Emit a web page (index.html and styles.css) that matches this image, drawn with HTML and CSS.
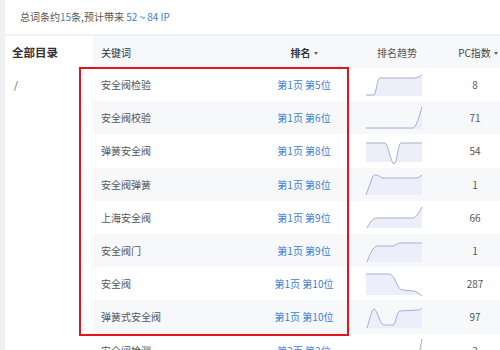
FILE: index.html
```html
<!DOCTYPE html>
<html lang="zh-CN">
<head>
<meta charset="utf-8">
<link rel="stylesheet" href="styles.css">
</head>
<body>
<div class="summary">总词条约<span class="blue">15</span>条,预计带来 <span class="blue">52 ~ 84 IP</span></div>
<div class="main">
  <aside class="side">
    <div class="side-head">全部目录</div>
    <div class="side-item">/</div>
  </aside>
  <div class="table">
    <div class="row head">
      <div class="c-kw">关键词</div>
      <div class="c-rank strong">排名<span class="caret"></span></div>
      <div class="c-trend">排名趋势</div>
      <div class="c-pc">PC指数<span class="caret"></span></div>
    </div>
    <div class="row">
      <div class="c-kw">安全阀检验</div>
      <div class="c-rank blue">第1页 第5位</div>
      <div class="c-trend"><svg class="spark" viewBox="0 0 56 22"><path class="area" d="M0,21 L8,21 C10,21 11,4 14,4 L47,4 C51,4 53,3 56,1 L56,22 L0,22Z"/><path class="line" d="M0,21 L8,21 C10,21 11,4 14,4 L47,4 C51,4 53,3 56,1"/></svg></div>
      <div class="c-pc">8</div>
    </div>
    <div class="row">
      <div class="c-kw">安全阀校验</div>
      <div class="c-rank blue">第1页 第6位</div>
      <div class="c-trend"><svg class="spark" viewBox="0 0 56 22"><path class="area" d="M0,21 L47,21 C50,21 53,10 56,0 L56,22 L0,22Z"/><path class="line" d="M0,21 L47,21 C50,21 53,10 56,0"/></svg></div>
      <div class="c-pc">71</div>
    </div>
    <div class="row">
      <div class="c-kw">弹簧安全阀</div>
      <div class="c-rank blue">第1页 第8位</div>
      <div class="c-trend"><svg class="spark" viewBox="0 0 56 22"><path class="area" d="M0,3 L19,3 C22,3 25,24 28,24 C31,24 32,3 35,3 L56,3 L56,22 L0,22Z"/><path class="line" d="M0,3 L19,3 C22,3 25,24 28,24 C31,24 32,3 35,3 L56,3"/></svg></div>
      <div class="c-pc">54</div>
    </div>
    <div class="row">
      <div class="c-kw">安全阀弹簧</div>
      <div class="c-rank blue">第1页 第8位</div>
      <div class="c-trend"><svg class="spark" viewBox="0 0 56 22"><path class="area" d="M0,22 L7,3 C9,1 12,2 16,5 L50,5 C53,5 54,3 56,2 L56,22 L0,22Z"/><path class="line" d="M0,22 L7,3 C9,1 12,2 16,5 L50,5 C53,5 54,3 56,2"/></svg></div>
      <div class="c-pc">1</div>
    </div>
    <div class="row">
      <div class="c-kw">上海安全阀</div>
      <div class="c-rank blue">第1页 第9位</div>
      <div class="c-trend"><svg class="spark" viewBox="0 0 56 22"><path class="area" d="M1,22 C4,16 7,12 11,12 L47,12 C50,12 53,6 56,1 L56,22 L1,22Z"/><path class="line" d="M1,22 C4,16 7,12 11,12 L47,12 C50,12 53,6 56,1"/></svg></div>
      <div class="c-pc">66</div>
    </div>
    <div class="row">
      <div class="c-kw">安全阀门</div>
      <div class="c-rank blue">第1页 第9位</div>
      <div class="c-trend"><svg class="spark" viewBox="0 0 56 22"><path class="area" d="M1,22 C4,14 7,6 12,6 L26,6 C30,6 30,3 35,3 L56,3 L56,22 L1,22Z"/><path class="line" d="M1,22 C4,14 7,6 12,6 L26,6 C30,6 30,3 35,3 L56,3"/></svg></div>
      <div class="c-pc">1</div>
    </div>
    <div class="row">
      <div class="c-kw">安全阀</div>
      <div class="c-rank blue">第1页 第10位</div>
      <div class="c-trend"><svg class="spark" viewBox="0 0 56 22"><path class="area" d="M0,1 L23,1 C30,1 30,17 37,17 L47,18 C51,18 53,21 56,23 L56,22 L0,22Z"/><path class="line" d="M0,1 L23,1 C30,1 30,17 37,17 L47,18 C51,18 53,21 56,23"/></svg></div>
      <div class="c-pc">287</div>
    </div>
    <div class="row">
      <div class="c-kw">弹簧式安全阀</div>
      <div class="c-rank blue">第1页 第10位</div>
      <div class="c-trend"><svg class="spark" viewBox="0 0 56 22"><path class="area" d="M1,22 C4,12 6,3 8,3 C11,3 14,19 18,19 L27,19 C30,19 30,6 34,5 L52,4 C54,4 55,3 56,2 L56,22 L1,22Z"/><path class="line" d="M1,22 C4,12 6,3 8,3 C11,3 14,19 18,19 L27,19 C30,19 30,6 34,5 L52,4 C54,4 55,3 56,2"/></svg></div>
      <div class="c-pc">97</div>
    </div>
    <div class="row">
      <div class="c-kw">安全阀检测</div>
      <div class="c-rank blue">第2页 第2位</div>
      <div class="c-trend"><svg class="spark" viewBox="0 0 56 22"><path class="area" d="M0,21 L50,21 C52,21 54,10 56,0 L56,22 L0,22Z"/><path class="line" d="M0,21 L50,21 C52,21 54,10 56,0"/></svg></div>
      <div class="c-pc">2</div>
    </div>
  </div>
  <div class="highlight"></div>
</div>
</body>
</html>
```
FILE: styles.css
```css
html, body {
  margin: 0;
  padding: 0;
}
body {
  width: 500px;
  height: 350px;
  overflow: hidden;
  background: #f0f1f4;
  font-family: "Noto Sans CJK SC", "Noto Sans", sans-serif;
  font-size: 10px;
  color: #555;
}
.blue {
  color: #3b7dd8;
}
.summary {
  margin-left: 5px;
  height: 34px;
  line-height: 34px;
  padding-left: 15px;
  background: #fff;
  color: #555;
}
.main {
  position: relative;
  display: flex;
  margin-left: 5px;
  margin-top: 2px;
  height: 320px;
  background: #fff;
}
.side {
  width: 88px;
  flex: none;
}
.side-head {
  height: 32px;
  line-height: 32px;
  padding-left: 7px;
  font-size: 11.5px;
  font-weight: 700;
  color: #333;
}
.side-item {
  height: 33px;
  line-height: 33px;
  padding-left: 9px;
  color: #555;
}
.table {
  flex: 1;
  overflow: hidden;
}
.row {
  display: grid;
  grid-template-columns: 167px 88px 92px 70px;
  align-items: center;
  height: 33.2px;
  background: #fff;
}
.row:nth-child(odd) {
  background: #f7f8fa;
}
.row.head {
  height: 32px;
  background: #f7f8fa;
  color: #333;
}
.c-kw {
  padding-left: 8px;
  white-space: nowrap;
}
.c-rank, .c-trend, .c-pc {
  text-align: center;
  white-space: nowrap;
}
.c-trend {
  display: flex;
  justify-content: center;
}
.head .c-trend {
  color: #555;
  padding-left: 6px;
}
.head .c-pc {
  color: #444;
  padding-left: 6px;
}
.strong {
  font-weight: 700;
  color: #333;
}
.caret {
  display: inline-block;
  width: 0;
  height: 0;
  margin-left: 3px;
  vertical-align: 2px;
  border-left: 2.5px solid transparent;
  border-right: 2.5px solid transparent;
  border-top: 3px solid #666;
}
.spark {
  width: 56px;
  height: 22px;
  overflow: visible;
}
.spark .area {
  fill: #eceef9;
  stroke: none;
}
.spark .line {
  fill: none;
  stroke: #a9acd9;
  stroke-width: 1;
}
.highlight {
  position: absolute;
  left: 74px;
  top: 31px;
  width: 266px;
  height: 265px;
  border: 2px solid #e3141c;
}
```
